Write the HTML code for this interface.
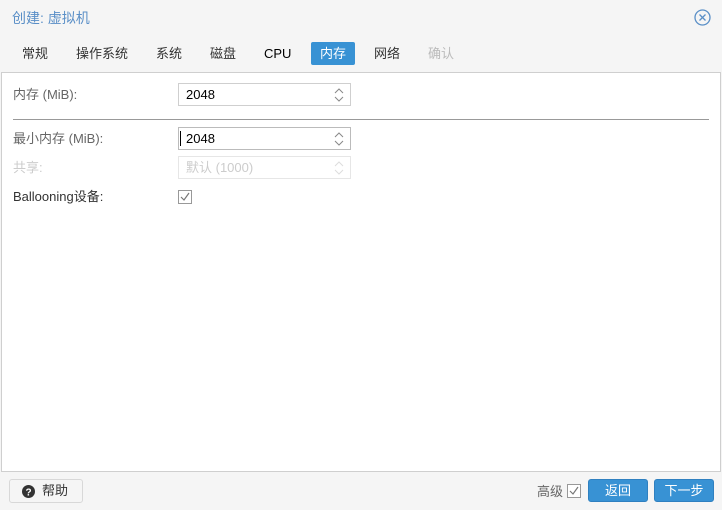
<!DOCTYPE html>
<html><head><meta charset="utf-8"><style>
*{box-sizing:border-box;margin:0;padding:0}
body{width:722px;height:510px;background:#f5f5f5;font-family:"Liberation Sans","Noto Sans CJK SC",sans-serif;font-size:13px;color:#000;position:relative;overflow:hidden}
.abs{position:absolute}
.title{left:12px;top:8px;font-size:14px;color:#5a8fc7;line-height:20px}
.tab{top:45px;font-size:13px;color:#333;line-height:17px}
.act{left:311px;top:42px;width:44px;height:23px;background:#3892d4;border-radius:2px;color:#fff;text-align:center;line-height:23px}
.panel{left:1px;top:72px;width:720px;height:400px;background:#fff;border:1px solid #cfcfcf}
.lbl{left:13px;color:#666;line-height:16px}
.inp{left:178px;width:173px;height:23px;border:1px solid #cfcfcf;background:#fff;padding-left:7px;line-height:22px;color:#000}
.spin{position:absolute;right:6px;top:4px}
.btn{height:23px;border-radius:3px;background:#3892d4;border:1px solid #2f80c0;color:#fff;text-align:center;line-height:21px;top:479px}
</style></head><body>
<div class="abs title">创建: 虚拟机</div>
<svg class="abs" style="left:694px;top:9px" width="17" height="17" viewBox="0 0 17 17"><circle cx="8.5" cy="8.5" r="7.5" fill="none" stroke="#5a8fc7" stroke-width="1.3"/><path d="M5.5 5.5L11.5 11.5M11.5 5.5L5.5 11.5" stroke="#5a8fc7" stroke-width="1.3"/></svg>
<div class="abs tab" style="left:22px">常规</div>
<div class="abs tab" style="left:76px">操作系统</div>
<div class="abs tab" style="left:156px">系统</div>
<div class="abs tab" style="left:210px">磁盘</div>
<div class="abs tab" style="left:264px;color:#000">CPU</div>
<div class="abs act">内存</div>
<div class="abs tab" style="left:374px">网络</div>
<div class="abs tab" style="left:428px;color:#bbb">确认</div>
<div class="abs panel"></div>
<div class="abs lbl" style="top:87px">内存 (MiB):</div>
<div class="abs inp" style="top:83px">2048<svg class="spin" width="10" height="14"><path d="M1 5L5 1L9 5M1 9L5 13L9 9" fill="none" stroke="#888"/></svg></div>
<div class="abs" style="left:13px;top:119px;width:696px;height:1px;background:#999"></div>
<div class="abs lbl" style="top:131px">最小内存 (MiB):</div>
<div class="abs inp" style="top:127px;border-color:#bbb"><span style="position:absolute;left:1px;top:3px;width:1px;height:15px;background:#000"></span>2048<svg class="spin" width="10" height="14"><path d="M1 5L5 1L9 5M1 9L5 13L9 9" fill="none" stroke="#888"/></svg></div>
<div class="abs lbl" style="top:160px;color:#ccc">共享:</div>
<div class="abs inp" style="top:156px;border-color:#e6e6e6;color:#ccc">默认 (1000)<svg class="spin" width="10" height="14"><path d="M1 5L5 1L9 5M1 9L5 13L9 9" fill="none" stroke="#ddd"/></svg></div>
<div class="abs lbl" style="top:189px;color:#333">Ballooning设备:</div>
<svg class="abs" style="left:178px;top:190px" width="14" height="14"><rect x=".5" y=".5" width="13" height="13" fill="#fff" stroke="#999"/><path d="M3 7L6 10L11 3" fill="none" stroke="#777" stroke-width="1.2"/></svg>
<div class="abs" style="left:9px;top:479px;width:74px;height:24px;border:1px solid #d8d8d8;border-radius:3px;background:#f5f5f5;color:#333;line-height:22px;padding-left:32px">帮助</div>
<svg class="abs" style="left:22px;top:485px" width="13" height="13"><circle cx="6.5" cy="6.5" r="6.5" fill="#333"/><text x="6.5" y="10.5" font-size="10" font-weight="bold" fill="#fff" text-anchor="middle" font-family="Liberation Sans">?</text></svg>
<div class="abs" style="left:537px;top:483px;color:#666;line-height:17px">高级</div>
<svg class="abs" style="left:567px;top:484px" width="14" height="14"><rect x=".5" y=".5" width="13" height="13" fill="#fff" stroke="#999"/><path d="M3 7L6 10L11 3" fill="none" stroke="#777" stroke-width="1.2"/></svg>
<div class="abs btn" style="left:588px;width:60px">返回</div>
<div class="abs btn" style="left:654px;width:60px">下一步</div>
</body></html>
